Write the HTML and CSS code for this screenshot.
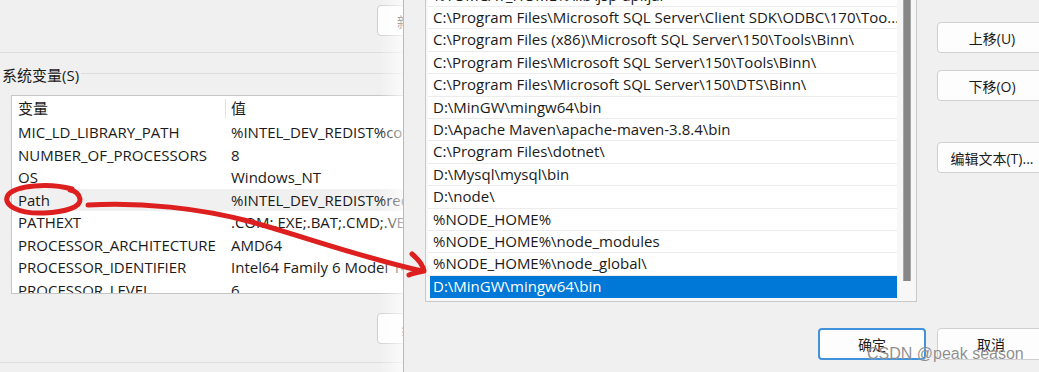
FILE: index.html
```html
<!DOCTYPE html>
<html lang="zh-CN">
<head>
    <meta charset="UTF-8">
    <title>编辑环境变量</title>
    <link rel="stylesheet" href="styles.css">
</head>
<body>

<div class="screen">

    <!-- window behind: system variables -->
    <section class="sysvars">
        <div class="top-strip">
            <button class="btn cut">新建(W)...</button>
        </div>
        <div class="group-title"><span>系统变量(S)</span></div>
        <div class="varlist">
            <div class="varrow head"><span class="name">变量</span><span class="value">值</span></div>
            <div class="varrow"><span class="name">MIC_LD_LIBRARY_PATH</span><span class="value">%INTEL_DEV_REDIST%compiler\lib\mic</span></div>
            <div class="varrow"><span class="name">NUMBER_OF_PROCESSORS</span><span class="value">8</span></div>
            <div class="varrow"><span class="name">OS</span><span class="value">Windows_NT</span></div>
            <div class="varrow hover"><span class="name">Path</span><span class="value">%INTEL_DEV_REDIST%redist\intel64\compiler</span></div>
            <div class="varrow"><span class="name">PATHEXT</span><span class="value">.COM;.EXE;.BAT;.CMD;.VBS;.VBE;.JS</span></div>
            <div class="varrow"><span class="name">PROCESSOR_ARCHITECTURE</span><span class="value">AMD64</span></div>
            <div class="varrow"><span class="name">PROCESSOR_IDENTIFIER</span><span class="value">Intel64 Family 6 Model 142 Stepping 10</span></div>
            <div class="varrow"><span class="name">PROCESSOR_LEVEL</span><span class="value">6</span></div>
        </div>
        <div class="bottom-strip">
            <button class="btn cut">编辑(I)...</button>
        </div>
    </section>

    <!-- edit path dialog -->
    <section class="dialog">
        <div class="dialog-main">
            <div class="pathlist">
                <div class="paths">
                    <div class="paths-inner">
                        <div class="path">%TOMCAT_HOME%\lib\jsp-api.jar</div>
                        <div class="path">C:\Program Files\Microsoft SQL Server\Client SDK\ODBC\170\Too...</div>
                        <div class="path">C:\Program Files (x86)\Microsoft SQL Server\150\Tools\Binn\</div>
                        <div class="path">C:\Program Files\Microsoft SQL Server\150\Tools\Binn\</div>
                        <div class="path">C:\Program Files\Microsoft SQL Server\150\DTS\Binn\</div>
                        <div class="path">D:\MinGW\mingw64\bin</div>
                        <div class="path">D:\Apache Maven\apache-maven-3.8.4\bin</div>
                        <div class="path">C:\Program Files\dotnet\</div>
                        <div class="path">D:\Mysql\mysql\bin</div>
                        <div class="path">D:\node\</div>
                        <div class="path">%NODE_HOME%</div>
                        <div class="path">%NODE_HOME%\node_modules</div>
                        <div class="path">%NODE_HOME%\node_global\</div>
                        <div class="path selected">D:\MinGW\mingw64\bin</div>
                    </div>
                </div>
                <div class="scrollbar"><div class="thumb"></div></div>
            </div>
            <div class="side-buttons">
                <button class="btn side">上移(U)</button>
                <button class="btn side">下移(O)</button>
                <button class="btn side edit-text">编辑文本(T)...</button>
            </div>
        </div>
        <div class="dialog-footer">
            <button class="btn footer primary">确定</button>
            <button class="btn footer">取消</button>
        </div>
    </section>

    <!-- red hand-drawn annotation -->
    <svg class="annotation" width="1039" height="372" viewBox="0 0 1039 372">
        <path d="M72 189 C 50 183, 16 185, 8 195 C 2 205, 18 214, 44 213 C 66 212, 81 207, 80 199 C 79 194, 76 191, 70 190" />
        <path d="M88 205 C 140 202, 200 208, 252 222 C 305 237, 360 257, 422 271" />
        <path d="M412 254 C 418 259, 423 265, 424 271 C 420 272, 414 273, 409 275" />
    </svg>

    <div class="watermark">CSDN @peak season</div>
</div>

</body>
</html>
```

FILE: styles.css
```css
body {
    margin: 0;
    background-color: #f0f0f0;
    font-family: "Open Sans", "Noto Sans CJK SC", sans-serif;
    color: #1a1a1a;
}
.screen {
    position: relative;
    width: 1039px;
    height: 372px;
    display: flex;
    overflow: hidden;
}

/* buttons */
.btn {
    font-family: "Open Sans", "Noto Sans CJK SC", sans-serif;
    font-size: 14px;
    color: #1a1a1a;
    background-color: #fdfdfd;
    border: 1px solid #d0d0d0;
    border-radius: 4px;
    padding: 0;
    flex-shrink: 0;
}
.btn.cut {
    width: 100px;
    height: 31px;
    margin-left: 377px;
}

/* left window */
.sysvars {
    position: relative;
    width: 403px;
    flex-shrink: 0;
    overflow: hidden;
}
.sysvars::after {
    content: "";
    position: absolute;
    top: 0;
    right: 0;
    bottom: 0;
    width: 24px;
    background: linear-gradient(to right, rgba(255, 255, 255, 0), rgba(255, 255, 255, 0.7));
}
.top-strip {
    height: 53px;
    padding-top: 5px;
    box-sizing: border-box;
    border-bottom: 1px solid #dddddd;
    display: flex;
}
.group-title {
    height: 42px;
    display: flex;
    align-items: center;
    padding-left: 2px;
    font-size: 15px;
}
.group-title::after {
    content: "";
    flex: 1;
    border-top: 1px solid #dddddd;
    margin-left: 2px;
    margin-top: -2px;
}
.varlist {
    margin-left: 11px;
    width: 420px;
    height: 199px;
    box-sizing: border-box;
    border: 1px solid #c6c6c6;
    background: #ffffff;
    overflow: hidden;
    font-size: 15px;
}
.varrow {
    display: flex;
    height: 22.5px;
    line-height: 22.5px;
    white-space: nowrap;
}
.varrow.head {
    height: 25px;
    line-height: 25px;
}
.varrow .name {
    width: 207px;
    padding-left: 6px;
    flex-shrink: 0;
}
.varrow .value {
    padding-left: 6px;
}
.varrow.head .value {
    border-left: 1px solid #e2e2e2;
    padding-left: 5px;
    margin: 3px 0;
    line-height: 19px;
}
.varrow.hover {
    background-color: #f0f0f0;
    margin-left: 2px;
}
.varrow.hover .name {
    padding-left: 4px;
}
.bottom-strip {
    height: 69px;
    padding-top: 19px;
    box-sizing: border-box;
    border-bottom: 1px solid #dddddd;
    display: flex;
}

/* edit path dialog */
.dialog {
    flex: 1;
    border-left: 1px solid #b9b9b9;
    padding-left: 21px;
    overflow: hidden;
}
.dialog-main {
    display: flex;
    align-items: flex-start;
}
.pathlist {
    width: 492px;
    height: 302px;
    box-sizing: border-box;
    border: 1px solid #c9c9c9;
    border-top: none;
    background: #f7f7f7;
    display: flex;
    flex-shrink: 0;
}
.paths {
    width: 469px;
    margin-left: 2px;
    height: 298px;
    overflow: hidden;
    font-size: 15px;
}
.paths-inner {
    margin-top: -15.4px;
}
.path {
    height: 22.4px;
    line-height: 21.4px;
    box-sizing: border-box;
    padding-left: 5px;
    background: #ffffff;
    border-bottom: 1px solid #ececec;
    white-space: nowrap;
    overflow: hidden;
}
.path.selected {
    background-color: #0078d7;
    color: #ffffff;
    margin-left: 2px;
    padding-left: 3px;
    border-bottom: none;
}
.scrollbar {
    width: 8px;
    margin-left: 6px;
    height: 100%;
}
.scrollbar .thumb {
    height: 281px;
    background-color: #878787;
    border-left: 1px solid #a5a5a5;
    border-right: 1px solid #a5a5a5;
    box-sizing: border-box;
}
.side-buttons {
    display: flex;
    flex-direction: column;
    gap: 17px;
    margin-left: 20px;
    padding-top: 22px;
}
.btn.side {
    width: 110px;
    height: 31px;
}
.btn.side.edit-text {
    margin-top: 24px;
}
.dialog-footer {
    display: flex;
    gap: 11px;
    padding-left: 393px;
    margin-top: 26px;
}
.btn.footer {
    width: 108px;
    height: 32px;
}
.btn.primary {
    border: 2px solid #4191db;
}

/* overlays */
.annotation {
    position: absolute;
    top: 0;
    left: 0;
    pointer-events: none;
}
.annotation path {
    fill: none;
    stroke: #dd1f1f;
    stroke-width: 5;
    stroke-linecap: round;
    stroke-linejoin: round;
}
.watermark {
    position: absolute;
    left: 867px;
    top: 345px;
    font-family: "Liberation Sans", Arial, sans-serif;
    font-size: 16px;
    line-height: 18px;
    color: rgba(105, 105, 105, 0.75);
    text-shadow: 0 0 1px rgba(255, 255, 255, 0.8);
    white-space: nowrap;
}
```
